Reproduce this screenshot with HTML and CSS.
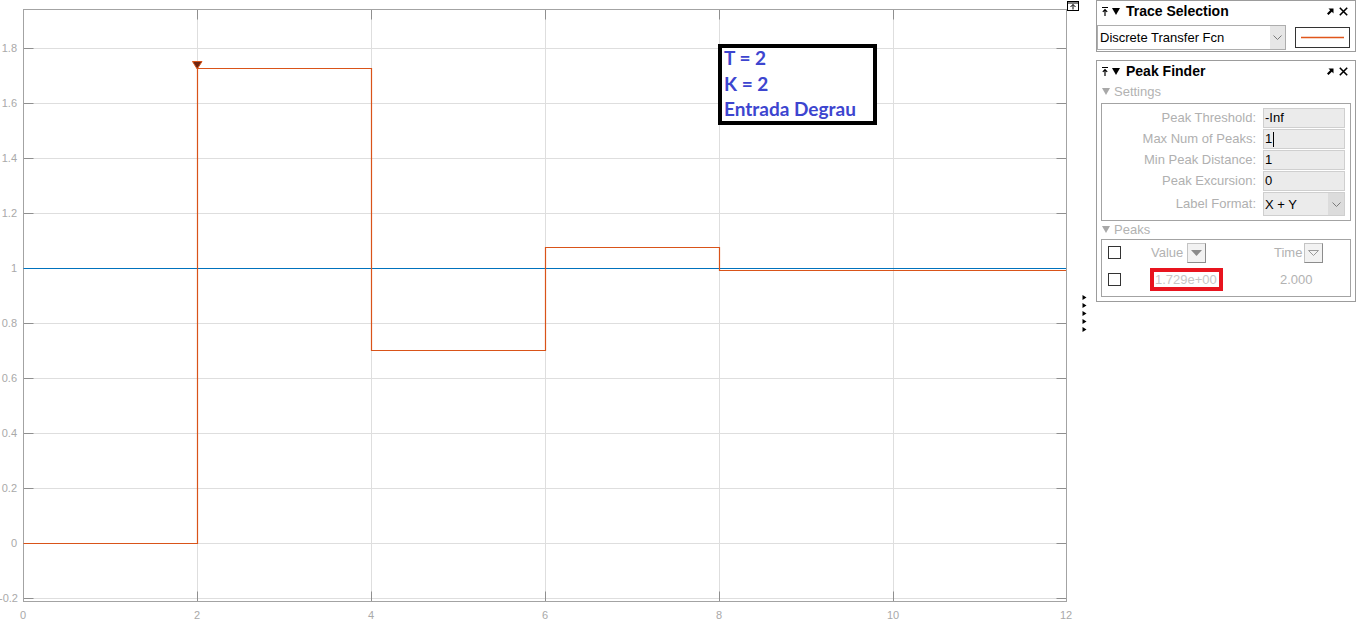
FILE: index.html
```html
<!DOCTYPE html>
<html>
<head>
<meta charset="utf-8">
<title>Scope</title>
<link rel="stylesheet" href="styles.css">
</head>
<body>
<div class="page">
  <div class="plot">
    <svg class="plot-svg" width="1090" height="627" viewBox="0 0 1090 627">
      <g class="grid">
        <line x1="197.5" y1="9.5" x2="197.5" y2="601.5"/>
        <line x1="371.5" y1="9.5" x2="371.5" y2="601.5"/>
        <line x1="545.5" y1="9.5" x2="545.5" y2="601.5"/>
        <line x1="719.5" y1="9.5" x2="719.5" y2="601.5"/>
        <line x1="893.5" y1="9.5" x2="893.5" y2="601.5"/>
        <line x1="23.5" y1="48.5" x2="1066.5" y2="48.5"/>
        <line x1="23.5" y1="103.5" x2="1066.5" y2="103.5"/>
        <line x1="23.5" y1="158.5" x2="1066.5" y2="158.5"/>
        <line x1="23.5" y1="213.5" x2="1066.5" y2="213.5"/>
        <line x1="23.5" y1="268.5" x2="1066.5" y2="268.5"/>
        <line x1="23.5" y1="323.5" x2="1066.5" y2="323.5"/>
        <line x1="23.5" y1="378.5" x2="1066.5" y2="378.5"/>
        <line x1="23.5" y1="433.5" x2="1066.5" y2="433.5"/>
        <line x1="23.5" y1="488.5" x2="1066.5" y2="488.5"/>
        <line x1="23.5" y1="543.5" x2="1066.5" y2="543.5"/>
        <line x1="23.5" y1="598.5" x2="1066.5" y2="598.5"/>
      </g>
      <g class="ticks">
        <path d="M23.5 48.5h10M23.5 103.5h10M23.5 158.5h10M23.5 213.5h10M23.5 268.5h10M23.5 323.5h10M23.5 378.5h10M23.5 433.5h10M23.5 488.5h10M23.5 543.5h10M23.5 598.5h10"/>
        <path d="M1066.5 48.5h-10M1066.5 103.5h-10M1066.5 158.5h-10M1066.5 213.5h-10M1066.5 268.5h-10M1066.5 323.5h-10M1066.5 378.5h-10M1066.5 433.5h-10M1066.5 488.5h-10M1066.5 543.5h-10M1066.5 598.5h-10"/>
        <path d="M197.5 9.5v10M371.5 9.5v10M545.5 9.5v10M719.5 9.5v10M893.5 9.5v10"/>
        <path d="M197.5 601.5v-10M371.5 601.5v-10M545.5 601.5v-10M719.5 601.5v-10M893.5 601.5v-10"/>
      </g>
      <rect class="axes" x="23.5" y="9.5" width="1043" height="592"/>
      <g class="ylabels">
        <text x="17" y="52">1.8</text>
        <text x="17" y="107">1.6</text>
        <text x="17" y="162">1.4</text>
        <text x="17" y="217">1.2</text>
        <text x="17" y="272">1</text>
        <text x="17" y="327">0.8</text>
        <text x="17" y="382">0.6</text>
        <text x="17" y="437">0.4</text>
        <text x="17" y="492">0.2</text>
        <text x="17" y="547">0</text>
        <text x="18" y="602">-0.2</text>
      </g>
      <g class="xlabels">
        <text x="23" y="619">0</text>
        <text x="197" y="619">2</text>
        <text x="371" y="619">4</text>
        <text x="545" y="619">6</text>
        <text x="719" y="619">8</text>
        <text x="893" y="619">10</text>
        <text x="1066" y="619">12</text>
      </g>
      <path class="sig-in" d="M23.5 268.5H1066"/>
      <path class="sig-out" d="M23.5 543.5H197.5V68.5H371.5V350.5H545.5V247.5H719.5V270.5H1066"/>
      <polygon class="peak" points="192.5,61.5 202,61.5 197.2,69"/>
      <g class="undock-top">
        <rect x="1067.5" y="1.5" width="11" height="9"/>
        <path d="M1068 3h10M1073 9.5V4.5M1070.5 7l2.5-2.5 2.5 2.5"/>
      </g>
      <g class="arrows">
        <polygon points="1082.5,295 1086.5,297.5 1082.5,300"/>
        <polygon points="1082.5,303 1086.5,305.5 1082.5,308"/>
        <polygon points="1082.5,311 1086.5,313.5 1082.5,316"/>
        <polygon points="1082.5,319 1086.5,321.5 1082.5,324"/>
        <polygon points="1082.5,327 1086.5,329.5 1082.5,332"/>
      </g>
    </svg>
    <div class="note">
      <div>T = 2</div>
      <div>K = 2</div>
      <div>Entrada Degrau</div>
    </div>
  </div>

  <div class="side">
    <section class="panel trace">
      <header class="ph">
        <svg class="pin" width="6" height="10" viewBox="0 0 6 10"><path d="M0 1.5h6M3 10V3.5M0.8 5.8L3 3.5l2.2 2.3" /></svg>
        <svg class="tri" width="8" height="7" viewBox="0 0 8 7"><polygon points="0,0 8,0 4,7"/></svg>
        <span class="title">Trace Selection</span>
        <span class="grow"></span>
        <svg class="undock" width="7" height="7" viewBox="0 0 7 7"><polygon points="1.5,0.5 6.5,0.5 6.5,5.5 4.8,3.8 1.5,7 0,5.5 3.2,2.2"/></svg>
        <svg class="close" width="9" height="9" viewBox="0 0 9 9"><path d="M0.8 0.8L8.2 8.2M8.2 0.8L0.8 8.2"/></svg>
      </header>
      <div class="trace-row">
        <div class="select wide">
          <span class="sel-text">Discrete Transfer Fcn</span>
          <span class="sel-arrow"><svg width="9" height="5" viewBox="0 0 9 5"><path d="M0.5 0.5L4.5 4.5 8.5 0.5"/></svg></span>
        </div>
        <div class="swatch"><svg class="swline" width="43" height="3" viewBox="0 0 43 3"><path d="M0 1.5H43"/></svg></div>
      </div>
    </section>

    <section class="panel peakf">
      <header class="ph">
        <svg class="pin" width="6" height="10" viewBox="0 0 6 10"><path d="M0 1.5h6M3 10V3.5M0.8 5.8L3 3.5l2.2 2.3" /></svg>
        <svg class="tri" width="8" height="7" viewBox="0 0 8 7"><polygon points="0,0 8,0 4,7"/></svg>
        <span class="title">Peak Finder</span>
        <span class="grow"></span>
        <svg class="undock" width="7" height="7" viewBox="0 0 7 7"><polygon points="1.5,0.5 6.5,0.5 6.5,5.5 4.8,3.8 1.5,7 0,5.5 3.2,2.2"/></svg>
        <svg class="close" width="9" height="9" viewBox="0 0 9 9"><path d="M0.8 0.8L8.2 8.2M8.2 0.8L0.8 8.2"/></svg>
      </header>
      <div class="sec-label settings-label"><svg width="8" height="7" viewBox="0 0 8 7"><polygon points="0,0 8,0 4,7"/></svg><span>Settings</span></div>
      <div class="box settings">
        <label>Peak Threshold:</label><div class="input">-Inf</div>
        <label>Max Num of Peaks:</label><div class="input">1<span class="caret"></span></div>
        <label>Min Peak Distance:</label><div class="input">1</div>
        <label>Peak Excursion:</label><div class="input">0</div>
        <label>Label Format:</label>
        <div class="select fmt">
          <span class="sel-text">X + Y</span>
          <span class="sel-arrow"><svg width="9" height="5" viewBox="0 0 9 5"><path d="M0.5 0.5L4.5 4.5 8.5 0.5"/></svg></span>
        </div>
      </div>
      <div class="sec-label peaks-label"><svg width="8" height="7" viewBox="0 0 8 7"><polygon points="0,0 8,0 4,7"/></svg><span>Peaks</span></div>
      <div class="box peaks">
        <div class="prow head">
          <div class="c1"><span class="chk"></span></div>
          <div class="c2"><span class="colname">Value</span><span class="sortbtn filled"><svg width="11" height="6" viewBox="0 0 11 6"><polygon points="0,0 11,0 5.5,6"/></svg></span></div>
          <div class="c3"><span class="colname">Time</span><span class="sortbtn"><svg width="11" height="6" viewBox="0 0 11 6"><polygon points="0.5,0.5 10.5,0.5 5.5,5.5"/></svg></span></div>
        </div>
        <div class="prow data">
          <div class="c1"><span class="chk"></span></div>
          <div class="c2"><span class="hl">1.729e+00</span></div>
          <div class="c3"><span class="tval">2.000</span></div>
        </div>
      </div>
    </section>
  </div>
</div>
</body>
</html>
```

FILE: styles.css
```css
html, body {
  margin: 0;
  padding: 0;
  background: #ffffff;
}

.page {
  width: 1364px;
  height: 627px;
  overflow: hidden;
  display: flex;
  font-family: "Liberation Sans", Arial, sans-serif;
}

.plot {
  position: relative;
  width: 1090px;
  height: 627px;
  flex: none;
}

.plot-svg {
  display: block;
}

.grid line {
  stroke: #dedede;
  stroke-width: 1;
}

.ticks path {
  stroke: #8f8f8f;
  stroke-width: 1;
  fill: none;
}

.axes {
  fill: none;
  stroke: #a3a3a3;
  stroke-width: 1;
}

.ylabels text,
.xlabels text {
  font-family: "Liberation Sans", Arial, sans-serif;
  font-size: 11px;
  fill: #a9a9a9;
}

.ylabels text {
  text-anchor: end;
}

.xlabels text {
  text-anchor: middle;
}

.sig-in {
  stroke: #0072bd;
  stroke-width: 1.2;
  fill: none;
}

.sig-out {
  stroke: #d95319;
  stroke-width: 1.2;
  fill: none;
}

.peak {
  fill: #6e2410;
  stroke: #d95319;
  stroke-width: 1;
}

.undock-top rect {
  fill: #ffffff;
  stroke: #000000;
  stroke-width: 1;
}

.undock-top path {
  stroke: #000000;
  stroke-width: 1;
  fill: none;
}

.arrows polygon {
  fill: #000000;
}

/* annotation box over the plot */
.note {
  position: absolute;
  left: 718px;
  top: 44px;
  width: 149px;
  height: 73px;
  border: 4px solid #000000;
  padding: 0 0 0 2px;
  font-family: Lato, "Open Sans", sans-serif;
  font-weight: 700;
  font-size: 19px;
  line-height: 25.5px;
  color: #3d45cf;
  background: #ffffff;
}

.note div {
  white-space: nowrap;
}

.note div:first-child {
  margin-top: -3px;
}

/* side panels */
.side {
  width: 260px;
  margin-left: 6px;
  flex: none;
  display: flex;
  flex-direction: column;
}

.panel {
  box-sizing: border-box;
  border: 1px solid #9c9c9c;
  width: 260px;
  display: flex;
  flex-direction: column;
}

.trace {
  height: 52px;
}

.peakf {
  height: 242px;
  margin-top: 8px;
}

.ph {
  height: 20px;
  display: flex;
  align-items: center;
  padding: 0 7px 0 5px;
  flex: none;
}

.ph .pin {
  flex: none;
}

.ph .pin path {
  stroke: #000000;
  stroke-width: 1.2;
  fill: none;
}

.ph .tri {
  margin-left: 4px;
  flex: none;
}

.ph .tri polygon {
  fill: #000000;
}

.ph .title {
  margin-left: 6px;
  font-weight: 700;
  font-size: 14px;
  color: #000000;
}

.grow {
  flex: 1;
}

.ph .undock polygon {
  fill: #000000;
}

.ph .close {
  margin-left: 5px;
}

.ph .close path {
  stroke: #000000;
  stroke-width: 1.6;
  fill: none;
}

.trace-row {
  display: flex;
  align-items: flex-start;
  margin-top: 4px;
}

.select {
  box-sizing: border-box;
  display: flex;
  align-items: center;
  border: 1px solid #adadad;
  background: #ffffff;
}

.select.wide {
  width: 189px;
  height: 25px;
}

.sel-text {
  flex: 1;
  padding-left: 2px;
  font-size: 13px;
  color: #000000;
  white-space: nowrap;
}

.sel-arrow {
  align-self: stretch;
  width: 15px;
  background: #e6e6e6;
  display: flex;
  align-items: center;
  justify-content: center;
}

.sel-arrow path {
  stroke: #7a7a7a;
  stroke-width: 1;
  fill: none;
}

.swatch {
  box-sizing: border-box;
  width: 55px;
  height: 21px;
  margin: 2px 0 0 9px;
  border: 1px solid #333333;
  display: flex;
  align-items: center;
  justify-content: center;
}

.swline path {
  stroke: #e0561b;
  stroke-width: 1.3;
  fill: none;
}

.sec-label {
  display: flex;
  align-items: center;
  padding-left: 5px;
  font-size: 13px;
  color: #b2b2b2;
  flex: none;
}

.sec-label svg {
  margin-right: 4px;
}

.sec-label polygon {
  fill: #a8a8a8;
}

.settings-label {
  height: 20px;
}

.peaks-label {
  height: 16px;
}

.box {
  box-sizing: border-box;
  width: 250px;
  margin-left: 4px;
  border: 1px solid #a3a3a3;
  flex: none;
}

.settings {
  margin-top: 2px;
  height: 118px;
  padding: 4px 0 4px 0;
  display: grid;
  grid-template-columns: 154px 82px;
  column-gap: 7px;
  row-gap: 1px;
  grid-template-rows: 20px 20px 20px 20px 24px;
}

.settings label {
  text-align: right;
  font-size: 13px;
  color: #b0b0b0;
  line-height: 20px;
  white-space: nowrap;
}

.settings label:nth-last-of-type(1) {
  line-height: 24px;
}

.input {
  box-sizing: border-box;
  height: 20px;
  background: #ebebeb;
  border: 1px solid #cfcfcf;
  font-size: 13px;
  line-height: 18px;
  padding-left: 1px;
  color: #000000;
  display: flex;
  align-items: center;
}

.caret {
  display: inline-block;
  width: 1px;
  height: 15px;
  background: #000000;
  margin-left: 1px;
}

.select.fmt {
  height: 24px;
  border-color: #cfcfcf;
  background: #ebebeb;
}

.select.fmt .sel-text {
  padding-left: 1px;
}

.select.fmt .sel-arrow {
  width: 16px;
  background: #dcdcdc;
}

.peaks {
  margin-top: 2px;
  height: 58px;
}

.prow {
  display: flex;
}

.prow.head {
  height: 25px;
  align-items: center;
}

.prow.data {
  height: 28px;
  align-items: center;
}

.c1 {
  width: 48px;
  flex: none;
  display: flex;
}

.c2 {
  width: 123px;
  flex: none;
  display: flex;
  align-items: center;
}

.c3 {
  flex: 1;
  display: flex;
  align-items: center;
}

.chk {
  box-sizing: border-box;
  display: block;
  width: 13px;
  height: 13px;
  margin-left: 6px;
  border: 1px solid #333333;
  background: #ffffff;
}

.colname {
  font-size: 13px;
  color: #b2b2b2;
  padding-left: 1px;
}

.sortbtn {
  box-sizing: border-box;
  width: 19px;
  height: 20px;
  margin-left: 4px;
  border: 1px solid #c4c4c4;
  border-right-color: #8c8c8c;
  border-bottom-color: #8c8c8c;
  background: #f2f2f2;
  display: flex;
  align-items: center;
  justify-content: center;
}

.c3 .sortbtn {
  margin-left: 2px;
}

.sortbtn polygon {
  fill: none;
  stroke: #9a9a9a;
  stroke-width: 1;
}

.sortbtn.filled polygon {
  fill: #8a8a8a;
  stroke: none;
}

.hl {
  box-sizing: border-box;
  display: block;
  width: 73px;
  height: 23px;
  border: 4px solid #e8141e;
  font-size: 13px;
  line-height: 15px;
  color: #c6c6c6;
  padding-left: 1px;
  white-space: nowrap;
}

.tval {
  padding-left: 7px;
  font-size: 13px;
  color: #b2b2b2;
}
```
